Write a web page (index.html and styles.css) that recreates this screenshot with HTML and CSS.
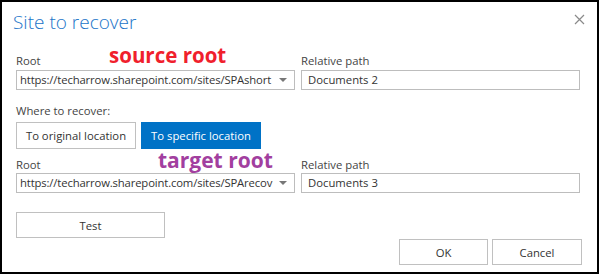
FILE: index.html
```html
<!DOCTYPE html>
<html lang="en">
<head>
	<meta charset="UTF-8">
	<title>Site to recover</title>
	<link rel="stylesheet" href="styles.css">
</head>
<body>
	<div class="dialog">
		<div class="head">
			<h1 class="title">Site to recover</h1>
			<svg class="close" width="11" height="11" viewBox="0 0 11 11">
				<path d="M1 1L10 10M10 1L1 10" stroke="#8a8a8a" stroke-width="1.2" fill="none"/>
			</svg>
		</div>

		<div class="fields">
			<div class="field">
				<div class="label">Root <span class="note note-source">source root</span></div>
				<div class="select">
					<span class="value">https://techarrow.sharepoint.com/sites/SPAshort</span>
					<span class="arrow"></span>
				</div>
			</div>
			<div class="field">
				<div class="label">Relative path</div>
				<div class="input">Documents 2</div>
			</div>
		</div>

		<div class="where">
			<div class="label">Where to recover:</div>
			<div class="toggle">
				<a href="javascript:void(0);" class="btn">To original location</a>
				<a href="javascript:void(0);" class="btn btn-active">To specific location</a>
			</div>
		</div>

		<div class="fields fields-target">
			<div class="field">
				<div class="label">Root <span class="note note-target">target root</span></div>
				<div class="select">
					<span class="value">https://techarrow.sharepoint.com/sites/SPArecov</span>
					<span class="arrow"></span>
				</div>
			</div>
			<div class="field">
				<div class="label">Relative path</div>
				<div class="input">Documents 3</div>
			</div>
		</div>

		<div class="foot">
			<a href="javascript:void(0);" class="btn btn-test">Test</a>
			<div class="actions">
				<a href="javascript:void(0);" class="btn btn-action">OK</a>
				<a href="javascript:void(0);" class="btn btn-action">Cancel</a>
			</div>
		</div>
	</div>
</body>
</html>
```

FILE: styles.css
```css
*{
	box-sizing: border-box;
}
body{
	margin: 0;
	font-family: 'Open Sans', 'Noto Sans', sans-serif;
	font-size: 11.3px;
	color: #333;
	background: #fff;
}
.dialog{
	width: 599px;
	height: 274px;
	border: 2px solid #000;
	padding: 0 17px 0 14px;
	display: flex;
	flex-direction: column;
}
.head{
	height: 50px;
	display: flex;
	justify-content: space-between;
	align-items: flex-start;
}
.title{
	margin: 7px 0 0 -3px;
	font-size: 19px;
	font-weight: 300;
	line-height: 26px;
	color: #1a74c8;
}
.close{
	margin-top: 12px;
	margin-right: -5px;
}
.fields{
	display: flex;
	gap: 6px;
}
.field{
	width: 279px;
}
.label{
	position: relative;
	height: 18px;
	line-height: 18px;
	color: #444;
}
.note{
	position: absolute;
	top: -10px;
	font-size: 20.5px;
	font-weight: 700;
	line-height: 26px;
}
.note-source{
	left: 93px;
	color: #f0202c;
}
.note-target{
	left: 142px;
	color: #a23f9f;
	font-size: 21px;
}
.select,
.input{
	height: 20px;
	border: 1px solid #bdbdbd;
	line-height: 18px;
	padding: 0 3px;
	white-space: nowrap;
	overflow: hidden;
}
.input{
	padding-left: 6px;
}
.select{
	display: flex;
	justify-content: space-between;
	align-items: center;
}
.value{
	overflow: hidden;
	flex: 1;
	letter-spacing: -0.15px;
}
.arrow{
	width: 0;
	height: 0;
	margin: 0 4px 0 4px;
	border-left: 4px solid transparent;
	border-right: 4px solid transparent;
	border-top: 4px solid #777;
}
.where{
	margin-top: 12px;
}
.toggle{
	display: flex;
	gap: 5px;
	margin-top: 2px;
}
.btn{
	display: block;
	height: 27px;
	line-height: 25px;
	border: 1px solid #c0c0c0;
	color: #333;
	text-align: center;
	text-decoration: none;
	background: #fff;
}
.toggle .btn{
	width: 120px;
}
.btn-active{
	background: #0072c6;
	border-color: #0072c6;
	color: #fff;
}
.fields-target{
	margin-top: 8px;
}
.fields-target .label{
	height: 16px;
	line-height: 16px;
}
.foot{
	margin-top: 19px;
}
.btn-test{
	width: 149px;
	height: 26px;
}
.actions{
	display: flex;
	justify-content: flex-end;
	gap: 4px;
	margin-top: 1px;
	margin-right: -2px;
}
.btn-action{
	width: 89px;
	height: 26px;
}
.btn-action + .btn-action{
	width: 90px;
}
```
